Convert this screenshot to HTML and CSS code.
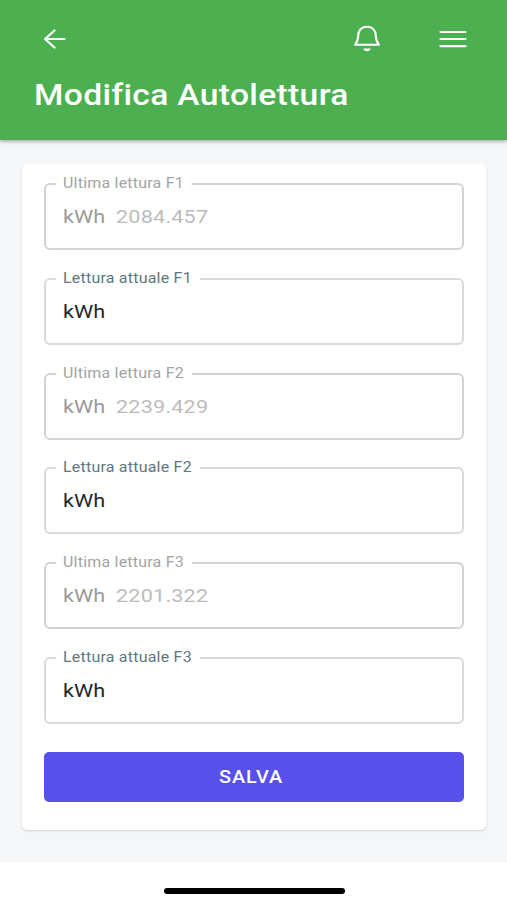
FILE: index.html
```html
<!DOCTYPE html>
<html lang="it">
<head>
<meta charset="utf-8">
<title>Modifica Autolettura</title>
<link rel="stylesheet" href="styles.css">
</head>
<body>
<header class="topbar">
  <nav class="actions">
    <svg class="back" viewBox="0 0 24 22" fill="none" stroke="#fff" stroke-width="2.2" stroke-linecap="round" stroke-linejoin="round"><path d="M21.500 11H2.500M11.500 2.500L2 11l9.500 8.500"/></svg>
    <svg class="bell" viewBox="0 0 28 28" fill="none" stroke="#fff" stroke-width="2.1" stroke-linejoin="round"><path d="M14 1.800C8.200 1.800 5.200 5.800 5.200 10.400C5.200 15 4.300 17 2 19.800H26C23.700 17 22.800 15 22.800 10.400C22.800 5.800 19.800 1.800 14 1.800Z"/><path d="M10.300 23.600H17.700C17 27.200 11 27.200 10.300 23.600Z" fill="#fff" stroke="none"/></svg>
    <svg class="menu" viewBox="0 0 28 20" fill="none" stroke="#fff" stroke-width="2.200" stroke-linecap="round"><path d="M1.500 3H26.500M1.500 10H26.500M1.500 17.200H26.500"/></svg>
  </nav>
  <h1><span class="wide">Modifica Autolettura</span></h1>
</header>
<main>
  <form class="card">
    <fieldset class="field disabled"><legend class="short"><span class="wide">Ultima lettura F1</span></legend><div class="value"><span class="unit wide">kWh</span><span class="number wide">2084.457</span></div></fieldset>
    <fieldset class="field"><legend><span class="wide">Lettura attuale F1</span></legend><div class="value"><span class="unit wide">kWh</span></div></fieldset>
    <fieldset class="field disabled"><legend class="short"><span class="wide">Ultima lettura F2</span></legend><div class="value"><span class="unit wide">kWh</span><span class="number wide">2239.429</span></div></fieldset>
    <fieldset class="field"><legend><span class="wide">Lettura attuale F2</span></legend><div class="value"><span class="unit wide">kWh</span></div></fieldset>
    <fieldset class="field disabled"><legend class="short"><span class="wide">Ultima lettura F3</span></legend><div class="value"><span class="unit wide">kWh</span><span class="number wide">2201.322</span></div></fieldset>
    <fieldset class="field"><legend><span class="wide">Lettura attuale F3</span></legend><div class="value"><span class="unit wide">kWh</span></div></fieldset>
    <button type="button" class="save"><span class="wide">SALVA</span></button>
  </form>
</main>
<footer><div class="home"></div></footer>
</body>
</html>
```
FILE: styles.css
```css
* { box-sizing: border-box; }
body {
  margin: 0;
  height: 900px;
  display: flex;
  flex-direction: column;
  overflow: hidden;
  background: #f4f6f8;
  font-family: Roboto, sans-serif;
}
.wide {
  display: inline-block;
  white-space: nowrap;
  transform: scaleX(1.14);
  transform-origin: left center;
}
.topbar {
  height: 140px;
  flex: none;
  background: #4caf50;
  color: #fff;
  box-shadow: 0 1px 4px rgba(0, 0, 0, .4);
}
.actions {
  display: flex;
  align-items: center;
  height: 78px;
  padding: 0 40px 0 43px;
}
.back { width: 24px; height: 22px; margin-right: auto; }
.bell { width: 28px; height: 28px; margin-right: 58.500px; }
.menu { width: 28px; height: 20px; }
h1 {
  margin: 0;
  padding-left: 34px;
  font-size: 29.500px;
  line-height: 34px;
  font-weight: 500;
  letter-spacing: .28px;
  font-variant-ligatures: none;
}
main {
  height: 722px;
  flex: none;
  padding: 24px 21px 0 22px;
}
.card {
  height: 666px;
  padding: 19px 22px 0;
  background: #fff;
  border-radius: 5px;
  box-shadow: 0 1px 2px rgba(0, 0, 0, .16);
}
.field {
  height: 67px;
  margin: 0 0 27.800px;
  padding: 0 0 0 10px;
  min-width: 0;
  border: 2px solid #dadada;
  border-radius: 6px;
  color: #22292c;
}
legend {
  width: 144px;
  height: 2px;
  padding: 0 0 0 7px;
  line-height: 1px;
  font-size: 14px;
  letter-spacing: .2px;
  color: #5d777d;
}
legend.short { width: 136px; }
.value {
  display: flex;
  align-items: center;
  height: 63px;
  padding-left: 7px;
  font-size: 19px;
}
.unit { width: 53px; }
.disabled { color: #9a9a9a; border-color: #d3d3d3; }
.disabled legend { color: #a3a3a3; }
.number { color: #bcbcbc; letter-spacing: .15px; }
.save {
  display: block;
  width: 100%;
  height: 50px;
  border: 0;
  border-radius: 5px;
  background: #5850ec;
  color: #fff;
  font: 500 17.500px Roboto, sans-serif;
  letter-spacing: .75px;
  padding: 0 6px 0 0;
}
.save .wide { transform-origin: center; }
footer {
  flex: 1;
  background: #fff;
  display: flex;
  justify-content: center;
  padding: 26px 0 0 1px;
}
.home {
  width: 181px;
  height: 6px;
  border-radius: 3px;
  background: #000;
}
```
